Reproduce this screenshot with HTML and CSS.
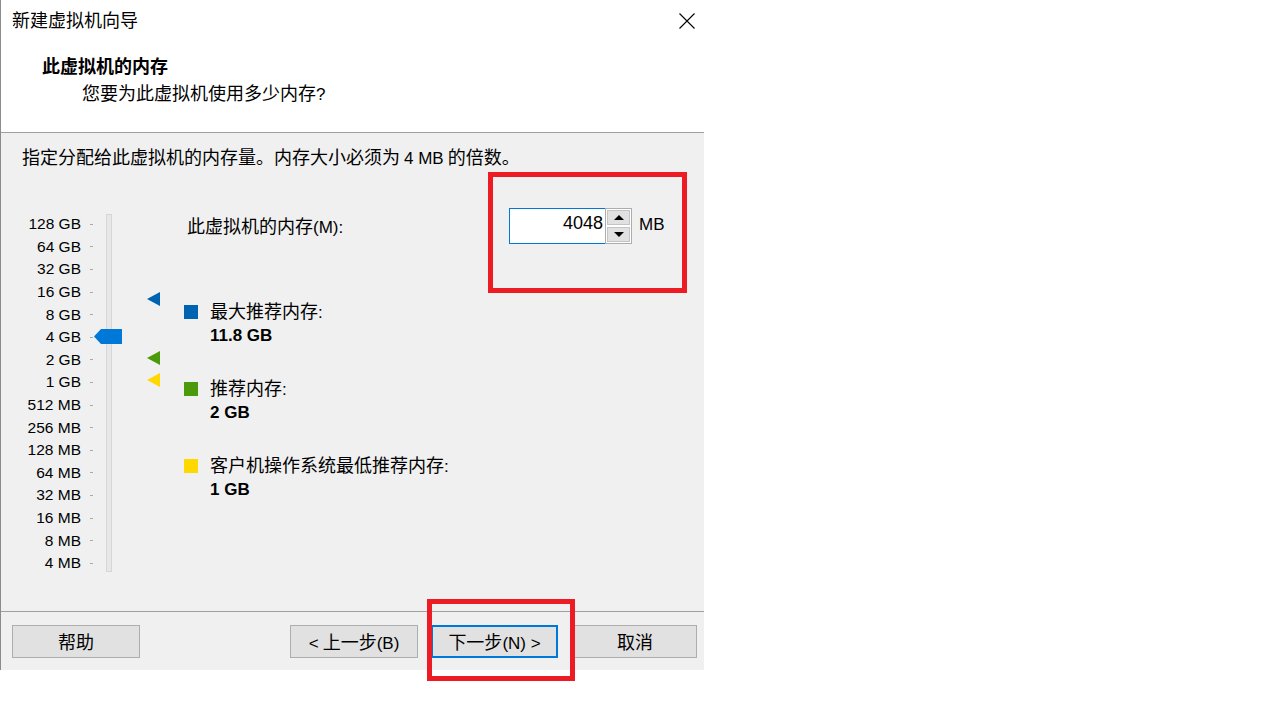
FILE: index.html
```html
<!DOCTYPE html>
<html lang="zh-CN">
<head>
<meta charset="utf-8">
<title>新建虚拟机向导</title>
<link rel="stylesheet" href="styles.css">
</head>
<body>
<div class="dialog">
  <div class="titlebar">
    <span class="title">新建虚拟机向导</span>
    <svg class="close" width="16" height="16" viewBox="0 0 16 16"><path d="M0.5 0.5 L15.5 15.5 M15.5 0.5 L0.5 15.5" stroke="#000" stroke-width="1.1" fill="none"/></svg>
  </div>
  <div class="header">
    <div class="h-title">此虚拟机的内存</div>
    <div class="h-sub">您要为此虚拟机使用多少内存<span class="lat">?</span></div>
  </div>
  <div class="body">
    <div class="desc">指定分配给此虚拟机的内存量。内存大小必须为 <span class="lat">4 MB</span> 的倍数。</div>
    <div class="main">
      <div class="slider">
        <div class="scale">
          <div class="row"><span class="lbl">128 GB</span><i class="tick"></i></div>
          <div class="row"><span class="lbl">64 GB</span><i class="tick"></i></div>
          <div class="row"><span class="lbl">32 GB</span><i class="tick"></i></div>
          <div class="row"><span class="lbl">16 GB</span><i class="tick"></i></div>
          <div class="row"><span class="lbl">8 GB</span><i class="tick"></i></div>
          <div class="row"><span class="lbl">4 GB</span><i class="tick"></i></div>
          <div class="row"><span class="lbl">2 GB</span><i class="tick"></i></div>
          <div class="row"><span class="lbl">1 GB</span><i class="tick"></i></div>
          <div class="row"><span class="lbl">512 MB</span><i class="tick"></i></div>
          <div class="row"><span class="lbl">256 MB</span><i class="tick"></i></div>
          <div class="row"><span class="lbl">128 MB</span><i class="tick"></i></div>
          <div class="row"><span class="lbl">64 MB</span><i class="tick"></i></div>
          <div class="row"><span class="lbl">32 MB</span><i class="tick"></i></div>
          <div class="row"><span class="lbl">16 MB</span><i class="tick"></i></div>
          <div class="row"><span class="lbl">8 MB</span><i class="tick"></i></div>
          <div class="row"><span class="lbl">4 MB</span><i class="tick"></i></div>
        </div>
        <div class="track"></div>
        <div class="thumb"></div>
        <div class="mark mark-max"></div>
        <div class="mark mark-rec"></div>
        <div class="mark mark-min"></div>
      </div>
      <div class="right">
        <div class="mem-row">
          <span class="mem-label">此虚拟机的内存<span class="lat">(M):</span></span>
          <div class="spin">
            <div class="spin-input">4048</div>
            <div class="spin-btns">
              <div class="spin-btn"><i class="arrow-up"></i></div>
              <div class="spin-btn"><i class="arrow-down"></i></div>
            </div>
          </div>
          <span class="unit">MB</span>
        </div>
        <div class="legend">
          <div class="item">
            <i class="sq sq-max"></i>
            <div class="item-text">
              <div class="item-label">最大推荐内存<span class="lat">:</span></div>
              <div class="item-value">11.8 GB</div>
            </div>
          </div>
          <div class="item">
            <i class="sq sq-rec"></i>
            <div class="item-text">
              <div class="item-label">推荐内存<span class="lat">:</span></div>
              <div class="item-value">2 GB</div>
            </div>
          </div>
          <div class="item">
            <i class="sq sq-min"></i>
            <div class="item-text">
              <div class="item-label">客户机操作系统最低推荐内存<span class="lat">:</span></div>
              <div class="item-value">1 GB</div>
            </div>
          </div>
        </div>
      </div>
    </div>
  </div>
  <div class="footer">
    <button class="btn btn-help">帮助</button>
    <span class="spacer"></span>
    <button class="btn btn-back"><span class="lat">&lt;</span> 上一步<span class="lat">(B)</span></button>
    <button class="btn btn-next">下一步<span class="lat">(N) &gt;</span></button>
    <button class="btn btn-cancel">取消</button>
  </div>
</div>
<div class="annot annot-mem"></div>
<div class="annot annot-next"></div>
</body>
</html>
```

FILE: styles.css
```css
html, body {
  margin: 0;
  padding: 0;
  background: #ffffff;
}
body {
  position: relative;
  width: 1275px;
  height: 709px;
  overflow: hidden;
  font-family: "Noto Sans CJK SC", "Liberation Sans", sans-serif;
  font-size: 18px;
  color: #000;
}
.lat {
  font-family: "Liberation Sans", "Noto Sans CJK SC", sans-serif;
  font-size: 17px;
  line-height: 1;
}
.dialog {
  width: 704px;
  height: 670px;
  box-sizing: border-box;
  border-left: 1px solid #8c8c8c;
  display: flex;
  flex-direction: column;
  background: #f0f0f0;
}
.titlebar {
  height: 40px;
  flex: none;
  background: #fff;
  display: flex;
  align-items: center;
  justify-content: space-between;
  padding: 0 9px 0 11px;
}
.title {
  font-size: 18px;
  line-height: 24px;
  height: 24px;
  margin-top: -2px;
}
.close {
  display: block;
  margin-top: 1px;
}
.header {
  flex: none;
  box-sizing: border-box;
  background: #fff;
  border-bottom: 1px solid #a0a0a0;
  padding: 13px 0 0 41px;
  height: 93px;
}
.h-title {
  font-weight: bold;
  line-height: 24px;
  height: 24px;
}
.h-sub {
  margin-top: 3px;
  padding-left: 40px;
  line-height: 24px;
  height: 24px;
}
.body {
  flex: none;
  height: 478px;
  box-sizing: border-box;
  padding: 11px 0 0 21px;
}
.desc {
  line-height: 24px;
  height: 24px;
}
.main {
  display: flex;
  margin-top: 40px;
}
.slider {
  position: relative;
  width: 162px;
  display: flex;
  align-items: flex-start;
  margin-top: 5px;
}
.scale {
  display: flex;
  flex-direction: column;
}
.row {
  height: 22.6px;
  display: flex;
  align-items: center;
}
.lbl {
  width: 59px;
  text-align: right;
  font-family: "Liberation Sans", sans-serif;
  font-size: 15.5px;
  line-height: 22px;
}
.tick {
  display: block;
  width: 3px;
  height: 1px;
  margin-left: 9px;
  background: #a8a8a8;
}
.track {
  width: 6px;
  height: 358px;
  margin: 1px 0 0 13px;
  box-sizing: border-box;
  border: 1px solid #d6d6d6;
  background: #e7e7e7;
}
.thumb {
  position: absolute;
  left: 72px;
  top: 116px;
  width: 28px;
  height: 15px;
  background: #0078d7;
  clip-path: polygon(0 50%, 7px 0, 100% 0, 100% 100%, 7px 100%);
}
.mark {
  position: absolute;
  left: 125px;
  width: 13px;
  height: 14px;
  clip-path: polygon(0 50%, 100% 0, 100% 100%);
}
.mark-max { top: 79px; background: #0063b1; }
.mark-rec { top: 138px; background: #4a9a0c; }
.mark-min { top: 160px; background: #ffd800; }
.right {
  display: flex;
  flex-direction: column;
}
.mem-row {
  height: 36px;
  display: flex;
  align-items: center;
}
.mem-label {
  width: 325px;
  box-sizing: border-box;
  padding-left: 3px;
  line-height: 24px;
  height: 24px;
  margin-top: -2px;
}
.spin {
  display: flex;
  height: 36px;
}
.spin-input {
  width: 96px;
  height: 36px;
  box-sizing: border-box;
  border: 1px solid #0078d7;
  border-right: none;
  background: #fff;
  text-align: right;
  padding: 3px 2px 0 0;
  font-family: "Liberation Sans", sans-serif;
  font-size: 18px;
  line-height: 22px;
}
.spin-btns {
  width: 27px;
  height: 36px;
  box-sizing: border-box;
  border: 1px solid #adadad;
  display: flex;
  flex-direction: column;
  background: #fff;
}
.spin-btn {
  flex: 1;
  margin: 1px;
  background: #e1e1e1;
  border: 1px solid #c4c4c4;
  display: flex;
  align-items: center;
  justify-content: center;
}
.arrow-up {
  width: 0;
  height: 0;
  border-left: 5px solid transparent;
  border-right: 5px solid transparent;
  border-bottom: 5px solid #000;
}
.arrow-down {
  width: 0;
  height: 0;
  border-left: 5px solid transparent;
  border-right: 5px solid transparent;
  border-top: 5px solid #000;
}
.unit {
  margin-left: 7px;
  font-family: "Liberation Sans", sans-serif;
  font-size: 17px;
  margin-top: -3px;
}
.legend {
  margin-top: 54px;
  display: flex;
  flex-direction: column;
  gap: 27px;
}
.item {
  display: flex;
  align-items: flex-start;
}
.sq {
  display: block;
  width: 14px;
  height: 14px;
  margin-top: 7px;
  margin-right: 12px;
}
.sq-max { background: #0063b1; }
.sq-rec { background: #4a9a0c; }
.sq-min { background: #ffd800; }
.item-label {
  line-height: 24px;
  height: 24px;
}
.item-value {
  line-height: 24px;
  height: 24px;
  margin-top: 2px;
  font-family: "Liberation Sans", sans-serif;
  font-size: 17px;
  font-weight: bold;
}
.footer {
  flex: 1;
  border-top: 1px solid #a0a0a0;
  display: flex;
  align-items: flex-start;
  padding: 13px 7px 0 11px;
}
.spacer {
  flex: 1;
}
.btn {
  height: 33px;
  box-sizing: border-box;
  border: 1px solid #adadad;
  background: #e1e1e1;
  font-family: "Noto Sans CJK SC", "Liberation Sans", sans-serif;
  font-size: 18px;
  line-height: 24px;
  color: #000;
  padding: 0 0 2px;
  margin: 0;
  text-align: center;
}
.btn-help { width: 128px; }
.btn-back { width: 128px; }
.btn-next {
  width: 127px;
  margin-left: 13px;
  border: 2px solid #0078d7;
}
.btn-cancel {
  width: 124px;
  margin-left: 15px;
}
.annot {
  position: absolute;
  box-sizing: border-box;
  border: 5px solid #ed1c24;
}
.annot-mem {
  left: 488px;
  top: 172px;
  width: 199px;
  height: 121px;
}
.annot-next {
  left: 427px;
  top: 599px;
  width: 148px;
  height: 82px;
}
```
